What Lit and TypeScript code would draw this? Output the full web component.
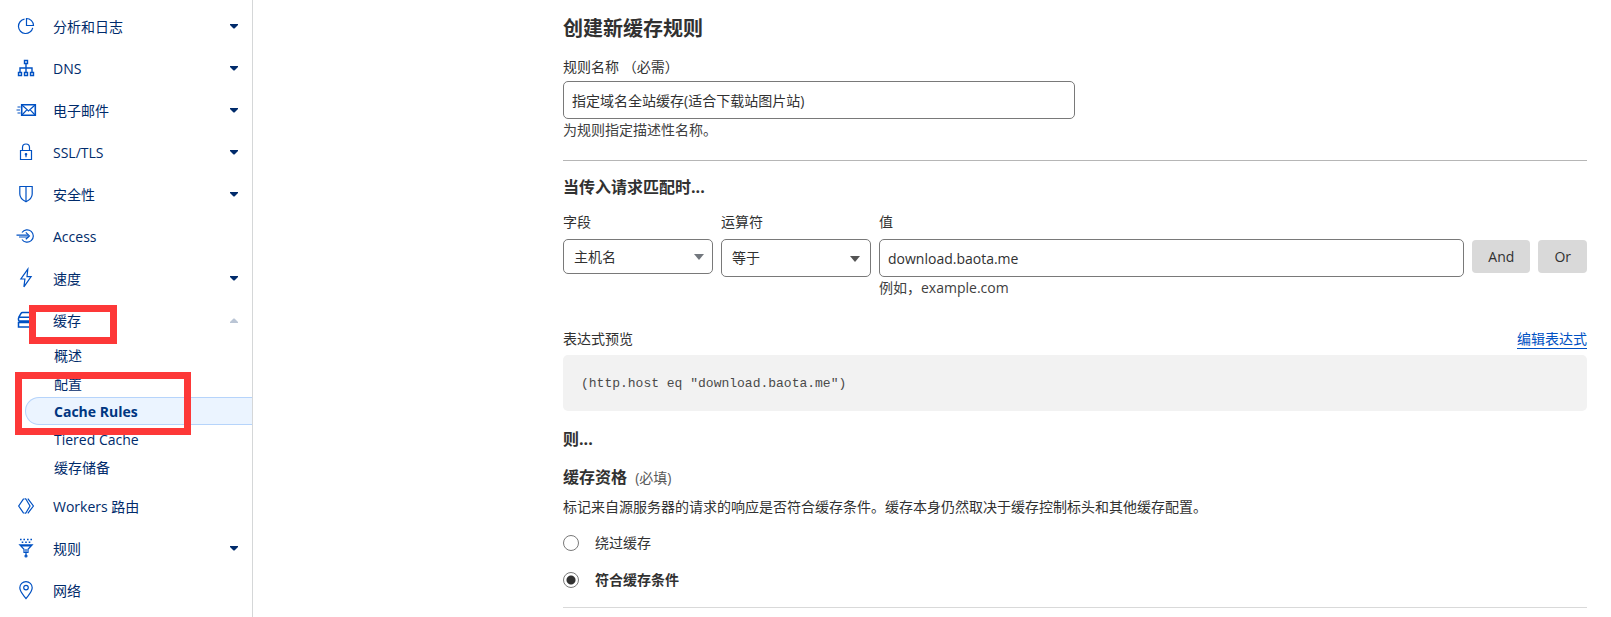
import { LitElement, html, css, svg, nothing, TemplateResult, SVGTemplateResult } from "lit";
import { customElement, property, state } from "lit/decorators.js";
import { classMap } from "lit/directives/class-map.js";

const icons: Record<string, SVGTemplateResult> = {
  analytics: svg`<path d="M8.500 3.200A7.200 7.200 0 1 0 16.700 11.800"/><path d="M10.500 2.500V9.500H17.500A7 7 0 0 0 10.500 2.500Z"/>`,
  dns: svg`<path d="M8.500 2.500h3v3h-3zM2.500 14.500h3v3h-3zM8.500 14.500h3v3h-3zM14.500 14.500h3v3h-3zM10 5.500v9M4 14.500v-4.500h12v4.500" stroke-width="1.400"/>`,
  email: svg`<path d="M5.700 4.700h13.600v10.600h-13.600z" stroke-width="1.600"/><path d="M6 5l6.500 6 6.500-6M6 15l5-5.300M19 15l-5-5.300M1.500 7h3M0.500 10h3.500M1.500 13h3"/>`,
  lock: svg`<path d="M4.500 8.500h11v9h-11zM6.500 8.500V5.500a3.500 3.500 0 0 1 7 0v3M10 12v3.200"/><circle cx="10" cy="12.200" r="0.700"/>`,
  shield: svg`<path d="M3.800 2.500h12.400v7.500c0 3.700-3 6.200-6.200 7.800-3.200-1.600-6.200-4.100-6.200-7.800zM10 2.500v15.300"/>`,
  access: svg`<path d="M6 6.500a6.200 6.200 0 1 1 0 7M9.800 6.400L13.400 9.900 9.800 13.300"/><path d="M0.500 9.200h11.800M3 11h9.300"/>`,
  speed: svg`<path d="M11.800 1.200L4.900 11h4l-1 7.800L15.100 8.600h-4.100z"/>`,
  caching: svg`<path d="M2.700 7.400L5 3.300q0.500-0.800 1.500-0.800h7q1 0 1.500 0.800l2.300 4.100M3.500 7.200h13q1 0 1 1v1.700q0 1-1 1h-13q-1 0-1-1v-1.700q0-1 1-1zM2.500 12.500h15v4.500h-15z" stroke-width="1.500"/>`,
  workers: svg`<path d="M7.700 2.600L2.700 10l5 7.400M8.500 2.800h1.200L14 10l-4.300 7.200H8.500M11.800 2.600L17.400 10l-5.600 7.400"/>`,
  rules: svg`<path d="M4 1.500h1.600M7.400 1.500h1.600M11 1.500h1.600M14.400 1.500h1.600M5.700 4.300h1.600M9.200 4.300h1.600M12.700 4.300h1.600" stroke-width="1.600"/><path d="M3.800 6.800h12.400l-4.200 4.500v3.200h-4v-3.200zM4.800 8h10.400M10 11v7.500"/><circle cx="10" cy="18" r="1"/>`,
  network: svg`<path d="M10 18.600C7 14.600 3.800 11.500 3.800 7.800a6.200 6.200 0 0 1 12.400 0c0 3.700-3.200 6.800-6.200 10.800z"/><circle cx="10" cy="7.600" r="2.300"/>`,
};

interface NavEntry {
  icon: string;
  label: string;
  expandable?: boolean;
  children?: string[];
}

const entries: NavEntry[] = [
  { icon: "analytics", label: "分析和日志", expandable: true },
  { icon: "dns", label: "DNS", expandable: true },
  { icon: "email", label: "电子邮件", expandable: true },
  { icon: "lock", label: "SSL/TLS", expandable: true },
  { icon: "shield", label: "安全性", expandable: true },
  { icon: "access", label: "Access" },
  { icon: "speed", label: "速度", expandable: true },
  {
    icon: "caching",
    label: "缓存",
    expandable: true,
    children: ["概述", "配置", "Cache Rules", "Tiered Cache", "缓存储备"],
  },
  { icon: "workers", label: "Workers 路由" },
  { icon: "rules", label: "规则", expandable: true },
  { icon: "network", label: "网络" },
];

@customElement("side-nav")
export class SideNav extends LitElement {
  @property() active = "Cache Rules";

  static styles = css`
    :host {
      display: block;
      box-sizing: border-box;
      border-right: 1px solid #d5d7d8;
      padding-top: 5px;
      color: #002b6b;
      font-size: 14px;
      line-height: 20px;
    }
    ul {
      list-style: none;
      margin: 0;
      padding: 0;
    }
    a {
      color: inherit;
      text-decoration: none;
    }
    .item {
      position: relative;
    }
    .row {
      display: flex;
      align-items: center;
      height: 42px;
      padding: 0 14px 0 16px;
    }
    .icon {
      width: 20px;
      height: 20px;
      margin-right: 17px;
      fill: none;
      stroke: #0051c3;
      stroke-width: 1.2;
      overflow: visible;
    }
    .name {
      flex: 1;
      padding-top: 2px;
    }
    .caret {
      width: 8px;
      height: 5px;
      fill: #002b6b;
    }
    .caret.open {
      fill: #bac5d5;
      transform: rotate(180deg);
    }
    .children {
      position: relative;
      padding-bottom: 4px;
    }
    .child {
      display: block;
      box-sizing: border-box;
      height: 28px;
      margin-left: 25px;
      padding: 4px 0 2px 28px;
      border: 1px solid transparent;
      border-right: 0;
    }
    .child.active {
      background: #ebf4ff;
      border-color: #b6d4fb;
      border-radius: 14px 0 0 14px;
      color: #003681;
      font-weight: 700;
    }
    .mark {
      position: absolute;
      box-sizing: border-box;
      border: 7px solid #fd3838;
      pointer-events: none;
    }
    .mark.parent {
      left: 29px;
      top: 6px;
      width: 88px;
      height: 39px;
    }
    .mark.current {
      left: 15px;
      top: 31px;
      width: 176px;
      height: 63px;
    }
  `;

  private renderChildren(names: string[]): TemplateResult {
    return html`
      <div class="mark parent"></div>
      <ul class="children">
        ${names.map(
          (n) => html`<li>
            <a class=${classMap({ child: true, active: n === this.active })} href="#">${n}</a>
          </li>`
        )}
        <li class="mark current" role="presentation"></li>
      </ul>
    `;
  }

  render() {
    return html`<nav>
      <ul>
        ${entries.map(
          (e) => html`<li class="item">
            <a class="row" href="#">
              <svg class="icon" viewBox="0 0 20 20" aria-hidden="true">${icons[e.icon]}</svg>
              <span class="name">${e.label}</span>
              ${e.expandable
                ? html`<svg
                    class=${classMap({ caret: true, open: !!e.children })}
                    viewBox="0 0 8 5"
                    aria-hidden="true"
                  >
                    <path d="M0 0H8V1L4.500 4.500H3.500L0 1Z" />
                  </svg>`
                : nothing}
            </a>
            ${e.children ? this.renderChildren(e.children) : nothing}
          </li>`
        )}
      </ul>
    </nav>`;
  }
}

@customElement("rule-form")
export class RuleForm extends LitElement {
  @state() private host = "download.baota.me";

  static styles = css`
    :host {
      display: block;
      color: #313131;
      font-size: 14px;
      line-height: 20px;
    }
    h1,
    h2,
    h3,
    p {
      margin: 0;
    }
    h1 {
      font-size: 20px;
      line-height: 28px;
    }
    h2,
    h3 {
      font-size: 16px;
      line-height: 24px;
    }
    hr {
      height: 1px;
      margin: 0;
      border: 0;
      background: #b6b6b6;
    }
    hr.light {
      background: #d9d9d9;
    }
    label {
      display: block;
    }
    input,
    select,
    button {
      font: inherit;
      color: inherit;
      box-sizing: border-box;
      margin: 0;
    }
    .text,
    select {
      width: 100%;
      height: 38px;
      padding: 0 8px;
      border: 1px solid #797979;
      border-radius: 5px;
      background: #fff;
    }
    select {
      display: block;
      appearance: none;
      padding: 0 28px 0 10px;
    }
    .text {
      display: block;
    }
    .select {
      position: relative;
    }
    .select.short select {
      height: 35px;
    }
    .arrow {
      position: absolute;
      right: 11px;
      top: 17px;
      width: 10px;
      height: 6px;
      fill: #545454;
      pointer-events: none;
    }
    .short .arrow {
      right: 9px;
      top: 15px;
      fill: #72777d;
    }
    .name {
      width: 50%;
      margin-top: 14px;
    }
    .name .text {
      margin-top: 4px;
    }
    .hint {
      margin-top: 1px;
      color: #404040;
    }
    .first {
      margin-top: 20px;
    }
    .match {
      margin-top: 14px;
    }
    .condition {
      display: grid;
      grid-template-columns: 150px 150px 1fr auto;
      column-gap: 8px;
      align-items: start;
      margin-top: 13px;
    }
    .condition label {
      margin-bottom: 7px;
    }
    .actions {
      display: flex;
      gap: 8px;
      padding-top: 1px;
    }
    .condition .hint {
      grid-column: 3;
    }
    .condition .actions {
      grid-column: 4;
      grid-row: 2;
    }
    button {
      height: 33px;
      padding: 0 16px;
      border: 0;
      border-radius: 4px;
      background: #d9d9d9;
    }
    .preview {
      display: flex;
      justify-content: space-between;
      margin-top: 31px;
    }
    .preview a {
      box-sizing: border-box;
      height: 20px;
      color: #0051c3;
      text-decoration: none;
      border-bottom: 1px solid #0051c3;
    }
    .code {
      margin-top: 6px;
      padding: 19px 18px 17px;
      border-radius: 5px;
      background: #f2f2f2;
      color: #4a4a4a;
      font: 13px/20px "Liberation Mono", monospace;
    }
    .then {
      margin-top: 16px;
    }
    .eligibility {
      margin-top: 14px;
    }
    .required {
      margin-left: 4px;
      color: #595959;
      font-size: 14px;
      font-weight: 400;
    }
    .desc {
      margin-top: 7px;
    }
    .options {
      display: flex;
      flex-direction: column;
      gap: 17px;
      margin: 16px 0 17px;
    }
    .option {
      display: flex;
      align-items: center;
      gap: 16px;
    }
    .option.chosen {
      font-weight: 600;
    }
    .option input {
      appearance: none;
      width: 16px;
      height: 16px;
      border: 1px solid #797979;
      border-radius: 50%;
      background: #fff;
    }
    .option input:checked {
      background: radial-gradient(circle, #313131 0 4px, #fff 5px);
    }
  `;

  private arrow() {
    return html`<svg class="arrow" viewBox="0 0 10 6" aria-hidden="true"><path d="M0 0H10L5 6Z" /></svg>`;
  }

  render() {
    return html`
      <h1>创建新缓存规则</h1>
      <div class="name">
        <label for="name">规则名称 （必需）</label>
        <input class="text" id="name" type="text" value="指定域名全站缓存(适合下载站图片站)" />
        <p class="hint">为规则指定描述性名称。</p>
      </div>
      <hr class="first" />
      <h2 class="match">当传入请求匹配时...</h2>
      <div class="condition">
        <label for="field">字段</label>
        <label for="operator">运算符</label>
        <label for="value">值</label>
        <span></span>
        <div class="select short">
          <select id="field"><option>主机名</option></select>
          ${this.arrow()}
        </div>
        <div class="select">
          <select id="operator"><option>等于</option></select>
          ${this.arrow()}
        </div>
        <input
          class="text"
          id="value"
          type="text"
          .value=${this.host}
          @input=${(e: Event) => (this.host = (e.target as HTMLInputElement).value)}
        />
        <div class="actions">
          <button type="button">And</button>
          <button type="button">Or</button>
        </div>
        <p class="hint">例如，example.com</p>
      </div>
      <div class="preview">
        <span>表达式预览</span>
        <a href="#">编辑表达式</a>
      </div>
      <div class="code">(http.host eq "${this.host}")</div>
      <h2 class="then">则...</h2>
      <h3 class="eligibility">缓存资格 <span class="required">(必填)</span></h3>
      <p class="desc">标记来自源服务器的请求的响应是否符合缓存条件。缓存本身仍然取决于缓存控制标头和其他缓存配置。</p>
      <div class="options">
        <label class="option"><input type="radio" name="eligibility" />绕过缓存</label>
        <label class="option chosen"><input type="radio" name="eligibility" checked />符合缓存条件</label>
      </div>
      <hr class="light" />
    `;
  }
}

@customElement("app-root")
export class AppRoot extends LitElement {
  static styles = css`
    :host {
      display: flex;
      min-height: 100vh;
      background: #fff;
      font-family: "Open Sans", "Noto Sans CJK SC", sans-serif;
    }
    side-nav {
      flex: 0 0 253px;
    }
    main {
      flex: 1;
      min-width: 0;
      padding: 15px 24px 0;
    }
    rule-form {
      max-width: 1024px;
      margin-left: auto;
    }
  `;

  render() {
    return html`
      <side-nav lang="zh-CN"></side-nav>
      <main lang="zh-CN"><rule-form></rule-form></main>
    `;
  }
}
